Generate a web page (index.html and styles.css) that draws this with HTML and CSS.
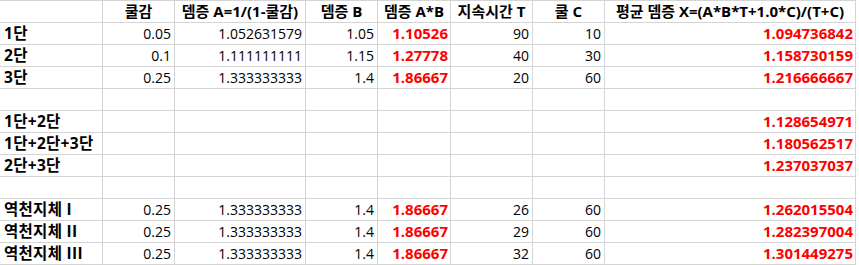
FILE: index.html
```html
<!DOCTYPE html>
<html lang="ko">
<head>
<meta charset="utf-8">
<title>뎀증 계산</title>
<link rel="stylesheet" href="styles.css">
</head>
<body>
<div class="sheet">
  <div class="c"></div><div class="c hd">쿨감</div><div class="c hd">뎀증 A=1/(1-쿨감)</div><div class="c hd">뎀증 B</div><div class="c hd">뎀증 A*B</div><div class="c hd">지속시간 T</div><div class="c hd">쿨 C</div><div class="c hd">평균 뎀증 X=(A*B*T+1.0*C)/(T+C)</div>

  <div class="c lb">1단</div><div class="c n">0.05</div><div class="c n">1.052631579</div><div class="c n">1.05</div><div class="c n red">1.10526</div><div class="c n">90</div><div class="c n">10</div><div class="c n red">1.094736842</div>

  <div class="c lb">2단</div><div class="c n">0.1</div><div class="c n">1.111111111</div><div class="c n">1.15</div><div class="c n red">1.27778</div><div class="c n">40</div><div class="c n">30</div><div class="c n red">1.158730159</div>

  <div class="c lb">3단</div><div class="c n">0.25</div><div class="c n">1.333333333</div><div class="c n">1.4</div><div class="c n red">1.86667</div><div class="c n">20</div><div class="c n">60</div><div class="c n red">1.216666667</div>

  <div class="c"></div><div class="c"></div><div class="c"></div><div class="c"></div><div class="c"></div><div class="c"></div><div class="c"></div><div class="c"></div>

  <div class="c lb">1단+2단</div><div class="c"></div><div class="c"></div><div class="c"></div><div class="c"></div><div class="c"></div><div class="c"></div><div class="c n red">1.128654971</div>

  <div class="c lb">1단+2단+3단</div><div class="c"></div><div class="c"></div><div class="c"></div><div class="c"></div><div class="c"></div><div class="c"></div><div class="c n red">1.180562517</div>

  <div class="c lb">2단+3단</div><div class="c"></div><div class="c"></div><div class="c"></div><div class="c"></div><div class="c"></div><div class="c"></div><div class="c n red">1.237037037</div>

  <div class="c"></div><div class="c"></div><div class="c"></div><div class="c"></div><div class="c"></div><div class="c"></div><div class="c"></div><div class="c"></div>

  <div class="c lb">역천지체 I</div><div class="c n">0.25</div><div class="c n">1.333333333</div><div class="c n">1.4</div><div class="c n red">1.86667</div><div class="c n">26</div><div class="c n">60</div><div class="c n red">1.262015504</div>

  <div class="c lb">역천지체 II</div><div class="c n">0.25</div><div class="c n">1.333333333</div><div class="c n">1.4</div><div class="c n red">1.86667</div><div class="c n">29</div><div class="c n">60</div><div class="c n red">1.282397004</div>

  <div class="c lb">역천지체 III</div><div class="c n">0.25</div><div class="c n">1.333333333</div><div class="c n">1.4</div><div class="c n red">1.86667</div><div class="c n">32</div><div class="c n">60</div><div class="c n red">1.301449275</div>
</div>
</body>
</html>
```

FILE: styles.css
```css
html, body {
  margin: 0;
  padding: 0;
  background: #ffffff;
}

.sheet {
  display: grid;
  grid-template-columns: 103px 72px 131px 72px 73px 82px 72px 251px;
  grid-auto-rows: 22px;
  width: 856px;
  border-top: 1px solid #d4d4d4;
  font-family: "Open Sans", "Noto Sans CJK KR", sans-serif;
  font-size: 14px;
  color: #000000;
}

.c {
  box-sizing: border-box;
  border-right: 1px solid #d4d4d4;
  border-bottom: 1px solid #d4d4d4;
  line-height: 21px;
  white-space: nowrap;
  overflow: visible;
}

.hd {
  font-weight: 700;
  font-size: 15px;
  text-align: center;
}

.lb {
  font-weight: 700;
  font-size: 15.5px;
  letter-spacing: 0.3px;
  padding-left: 4px;
}

.n {
  text-align: right;
  padding-right: 3px;
}

.red {
  color: #ff0000;
  font-weight: 700;
  font-size: 15px;
  padding-right: 2px;
}
```
